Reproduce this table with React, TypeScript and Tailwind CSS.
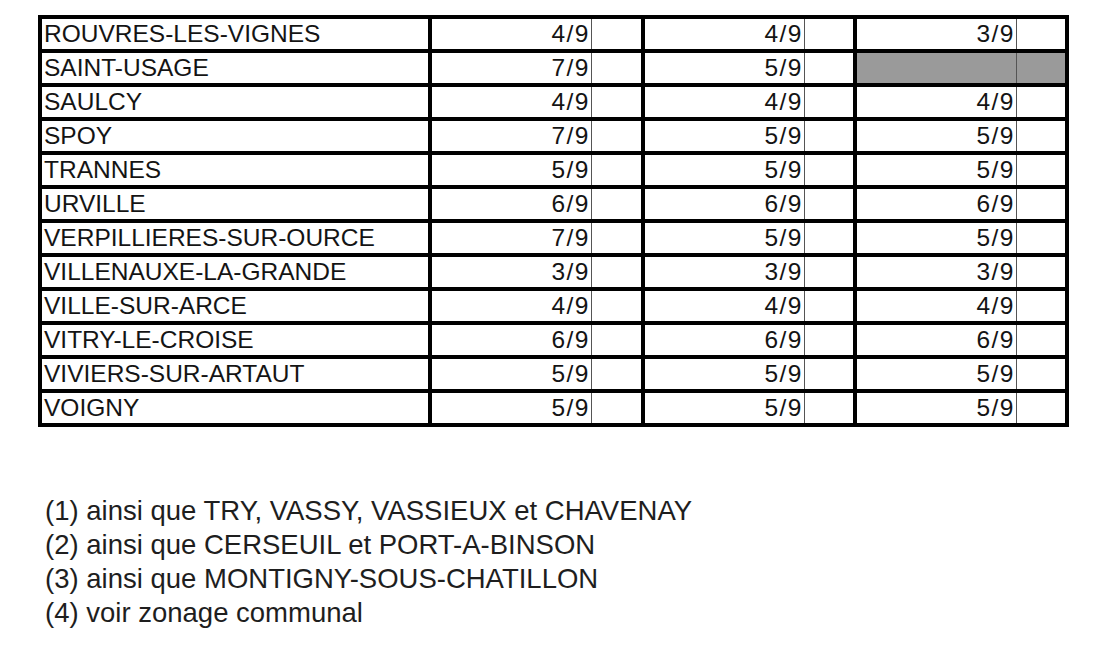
const rows: { name: string; values: (string | null)[] }[] = [
  { name: "ROUVRES-LES-VIGNES", values: ["4/9", "4/9", "3/9"] },
  { name: "SAINT-USAGE", values: ["7/9", "5/9", null] },
  { name: "SAULCY", values: ["4/9", "4/9", "4/9"] },
  { name: "SPOY", values: ["7/9", "5/9", "5/9"] },
  { name: "TRANNES", values: ["5/9", "5/9", "5/9"] },
  { name: "URVILLE", values: ["6/9", "6/9", "6/9"] },
  { name: "VERPILLIERES-SUR-OURCE", values: ["7/9", "5/9", "5/9"] },
  { name: "VILLENAUXE-LA-GRANDE", values: ["3/9", "3/9", "3/9"] },
  { name: "VILLE-SUR-ARCE", values: ["4/9", "4/9", "4/9"] },
  { name: "VITRY-LE-CROISE", values: ["6/9", "6/9", "6/9"] },
  { name: "VIVIERS-SUR-ARTAUT", values: ["5/9", "5/9", "5/9"] },
  { name: "VOIGNY", values: ["5/9", "5/9", "5/9"] },
];

const notes = [
  "(1) ainsi que TRY, VASSY, VASSIEUX et CHAVENAY",
  "(2) ainsi que CERSEUIL et PORT-A-BINSON",
  "(3) ainsi que MONTIGNY-SOUS-CHATILLON",
  "(4) voir zonage communal",
];

const groupWidths = ["w-[209px]", "w-[208px]", "w-[208px]"];

function ValueCell({ value, width }: { value: string | null; width: string }) {
  // null = greyed out cell (no value for this commune)
  const bg = value === null ? "bg-[#9a9a9a]" : "bg-white";
  return (
    <div className={`flex ${width} ${bg}`}>
      <div className="flex w-[160px] items-center justify-end border-r border-[#555] pr-[1px] tracking-[1.5px]">
        {value}
      </div>
      <div className="flex-1" />
    </div>
  );
}

export default function App() {
  return (
    <div
      className="min-h-screen bg-white pl-[38px] pt-[15px] text-[#141414]"
      style={{ fontFamily: '"Liberation Sans", Arial, sans-serif' }}
    >
      <div className="flex w-[1031px] flex-col gap-[4px] bg-black p-[4px] text-[24.5px] leading-none">
        {rows.map((row) => (
          <div key={row.name} className="flex h-[30px] gap-[4px]">
            <div className="flex w-[386px] items-center bg-white pl-[2px]">{row.name}</div>
            {row.values.map((v, i) => (
              <ValueCell key={i} value={v} width={groupWidths[i]} />
            ))}
          </div>
        ))}
      </div>

      {/* footnotes under the table */}
      <div className="mt-[67px] ml-[7px] text-[27.5px] leading-[34px] text-[#1e1e1e]">
        {notes.map((n) => (
          <div key={n}>{n}</div>
        ))}
      </div>
    </div>
  );
}
